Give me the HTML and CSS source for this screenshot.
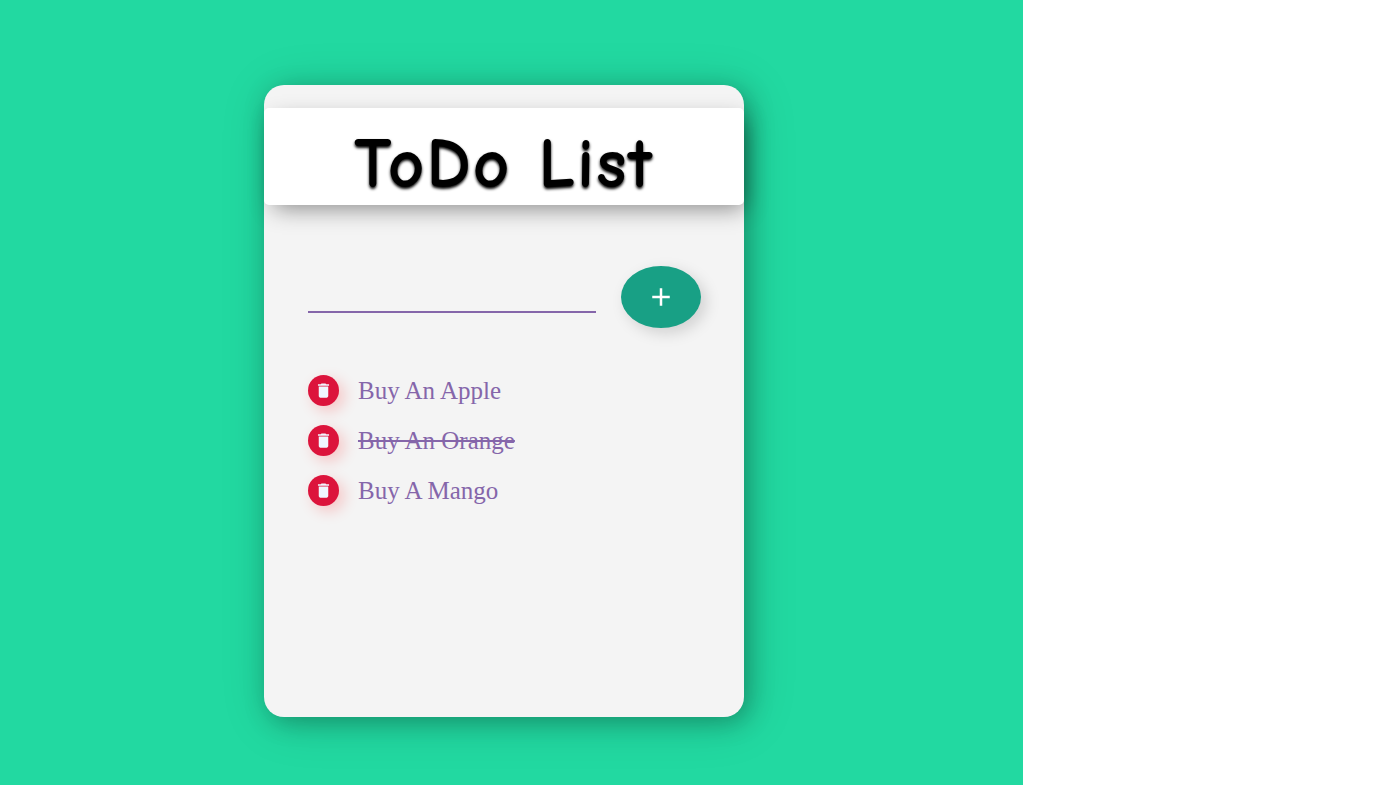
FILE: index.html
```html
<!DOCTYPE html>
<html lang="en">
<head>
<meta charset="utf-8">
<meta name="viewport" content="width=device-width, initial-scale=1">
<title>ToDo List</title>
<link rel="stylesheet" href="styles.css">
</head>
<body>
<svg class="symbols" aria-hidden="true">
  <symbol id="trash" viewBox="0 0 24 24"><path d="M6 19c0 1.100.9 2 2 2h8c1.100 0 2-.9 2-2V7H6v12zM19 4h-3.500l-1-1h-5l-1 1H5v2h14V4z"/></symbol>
</svg>
<main class="page">
  <section class="card">
    <h1 class="title">ToDo List</h1>
    <form class="entry">
      <input class="entry-input" type="text" aria-label="New item" autocomplete="off">
      <button class="add" type="button" aria-label="Add item">
        <svg class="add-icon" viewBox="0 0 24 24" aria-hidden="true"><path d="M19 13h-6v6h-2v-6H5v-2h6V5h2v6h6v2z"/></svg>
      </button>
    </form>
    <ul class="items">
      <li class="item"><button class="remove" type="button" aria-label="Delete Buy An Apple"><svg class="trash-icon" aria-hidden="true"><use href="#trash"/></svg></button><span>Buy An Apple</span></li>
      <li class="item"><button class="remove" type="button" aria-label="Delete Buy An Orange"><svg class="trash-icon" aria-hidden="true"><use href="#trash"/></svg></button><span class="done">Buy An Orange</span></li>
      <li class="item"><button class="remove" type="button" aria-label="Delete Buy A Mango"><svg class="trash-icon" aria-hidden="true"><use href="#trash"/></svg></button><span>Buy A Mango</span></li>
    </ul>
  </section>
</main>
</body>
</html>
```

FILE: styles.css
```css
* { box-sizing: border-box; }

body {
  margin: 0;
  background: #fff;
  font-family: "Times New Roman", "Liberation Serif", serif;
}

.symbols { display: none; }

.page {
  display: flex;
  align-items: center;
  justify-content: center;
  width: 73.33%;
  min-height: 100vh;
  padding: 17px 15px 0 0;
  background: #22d9a1;
}

.card {
  width: 100%;
  max-width: 480px;
  min-height: 632px;
  padding-top: 23px;
  border-radius: 20px;
  background: #f4f4f4;
  box-shadow: 5px 5px 50px rgba(0, 0, 0, 0.15), 5px 5px 25px rgba(0, 0, 0, 0.25);
}

.title {
  margin: 0;
  padding: 15px 0 0;
  border-radius: 5px;
  background: #fff;
  box-shadow: 5px 8px 22px -5px rgba(0, 0, 0, 0.45);
  color: #000;
  font-family: "Comic Sans MS", "Comic Neue", "Noto Sans", cursive;
  font-size: 71px;
  font-weight: 600;
  line-height: 82px;
  letter-spacing: 2px;
  text-align: center;
  text-shadow: 0 2px 3px #000;
}

.entry {
  display: flex;
  align-items: center;
  gap: 25px;
  padding: 61px 43px 0 44px;
}

.entry-input {
  flex: 1;
  min-width: 0;
  height: 32px;
  padding: 0;
  border: 0;
  border-bottom: 2px solid #8566aa;
  outline: 0;
  background: transparent;
  color: #8566aa;
  font: 25px "Times New Roman", "Liberation Serif", serif;
}

.add {
  display: grid;
  place-items: center;
  width: 80px;
  height: 62px;
  padding: 0;
  border: 0;
  border-radius: 50%;
  background: #18a085;
  box-shadow: 5px 5px 15px rgba(0, 0, 0, 0.15);
}

.add-icon {
  width: 30px;
  height: 30px;
  fill: #fff;
}

.items {
  display: grid;
  gap: 19px;
  margin: 0;
  padding: 47px 44px;
  list-style: none;
}

.item {
  display: flex;
  align-items: center;
  gap: 19px;
  color: #8566aa;
  font-size: 25px;
  line-height: 31px;
}

.done { text-decoration: line-through; }

.remove {
  display: grid;
  place-items: center;
  width: 31px;
  height: 31px;
  padding: 0;
  border: 0;
  border-radius: 50%;
  background: #dc143c;
  box-shadow: 5px 5px 15px rgba(255, 0, 0, 0.2);
}

.trash-icon {
  width: 19px;
  height: 19px;
  fill: #f0f8ff;
}
```
